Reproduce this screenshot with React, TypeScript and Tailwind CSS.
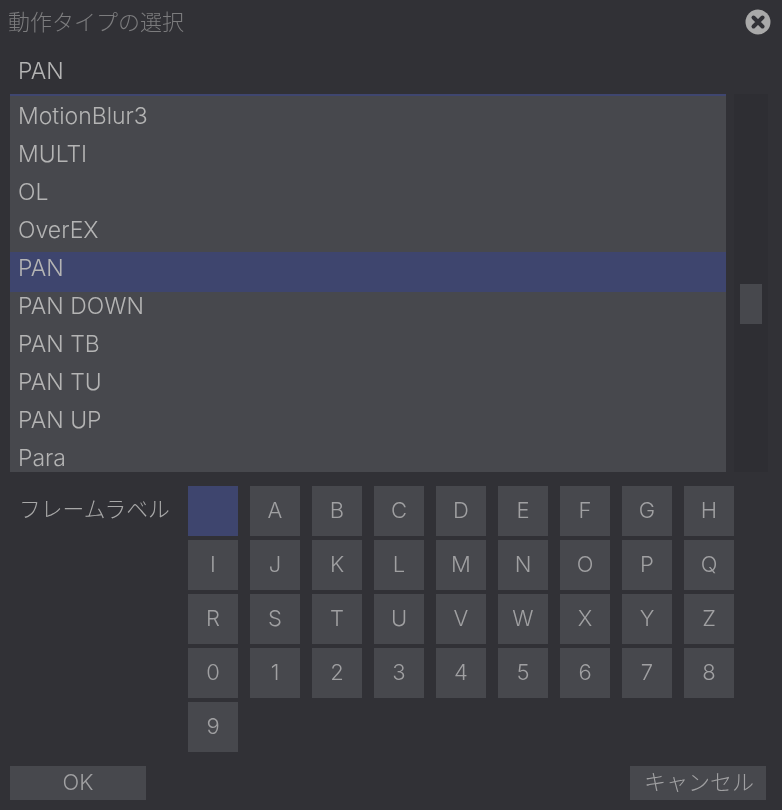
const ROWS = ["MotionBlur3", "MULTI", "OL", "OverEX", "PAN", "PAN DOWN", "PAN TB", "PAN TU", "PAN UP", "Para"];

const KEYS = [
  "", "A", "B", "C", "D", "E", "F", "G", "H",
  "I", "J", "K", "L", "M", "N", "O", "P", "Q",
  "R", "S", "T", "U", "V", "W", "X", "Y", "Z",
  "0", "1", "2", "3", "4", "5", "6", "7", "8",
  "9",
];

function CloseIcon() {
  return (
    <svg width="26" height="26" viewBox="0 0 26 26" aria-hidden="true">
      <circle cx="13" cy="13" r="12.5" fill="#a9a9a9" />
      <path d="M8.5 8.5 L17.5 17.5 M17.5 8.5 L8.5 17.5" stroke="#313136" strokeWidth="4" strokeLinecap="round" />
    </svg>
  );
}

export default function App() {
  return (
    <div className="flex h-[810px] w-[782px] flex-col overflow-hidden bg-[#313136] font-['Inter','Noto_Sans_CJK_JP',sans-serif] font-light text-[#b4b4b4] blur-[0.6px]">
      {/* タイトル */}
      <div className="flex h-[44px] items-center justify-between pr-[11px] pl-[8px]">
        <span className="text-[22px] leading-none text-[#7c7c7e]">動作タイプの選択</span>
        <CloseIcon />
      </div>

      <div className="flex h-[50px] items-center pt-[5px] pl-[18px] text-[23px] leading-none">PAN</div>

      {/* リスト */}
      <div className="flex h-[378px] pl-[10px]">
        <div className="h-full w-[716px] overflow-hidden border-t-2 border-[#3f4670] bg-[#47484d] pt-[4px]">
          {ROWS.map((row) =>
            row === "PAN" ? (
              <div key={row} className="mb-[-2px] h-[40px] bg-[#3e456e] pl-[8px] text-[23px] leading-[32px]">
                {row}
              </div>
            ) : (
              <div key={row} className="h-[38px] pl-[8px] text-[23px] leading-[32px]">
                {row}
              </div>
            ),
          )}
        </div>
        <div className="ml-[8px] h-full w-[34px] bg-[#2e2e33] pt-[190px] pl-[6px]">
          <div className="h-[40px] w-[22px] bg-[#47484d]" />
        </div>
      </div>

      {/* フレームラベル */}
      <div className="mt-[14px] flex h-[266px] pl-[19px]">
        <div className="w-[169px] pt-[9px] text-[21.8px] leading-[28px] text-[#a8a8a8]">フレームラベル</div>
        <div className="grid grid-cols-[repeat(9,50px)] auto-rows-[50px] gap-x-[12px] gap-y-[4px]">
          {KEYS.map((key, i) => (
            <div
              key={i}
              className={`flex items-center justify-center pb-[3px] text-[22px] leading-none text-[#a0a0a2] ${i === 0 ? "bg-[#3e456e]" : "bg-[#47484d]"}`}
            >
              {key}
            </div>
          ))}
        </div>
      </div>

      {/* ボタン */}
      <div className="mt-[14px] flex justify-between pr-[16px] pl-[10px]">
        <button type="button" className="h-[34px] w-[136px] bg-[#47484d] pb-[3px] text-[22px] leading-none text-[#a0a0a2]">
          OK
        </button>
        <button type="button" className="h-[34px] w-[136px] bg-[#47484d] pb-[3px] pl-[2px] text-[22px] leading-none text-[#a0a0a2]">
          キャンセル
        </button>
      </div>
    </div>
  );
}
